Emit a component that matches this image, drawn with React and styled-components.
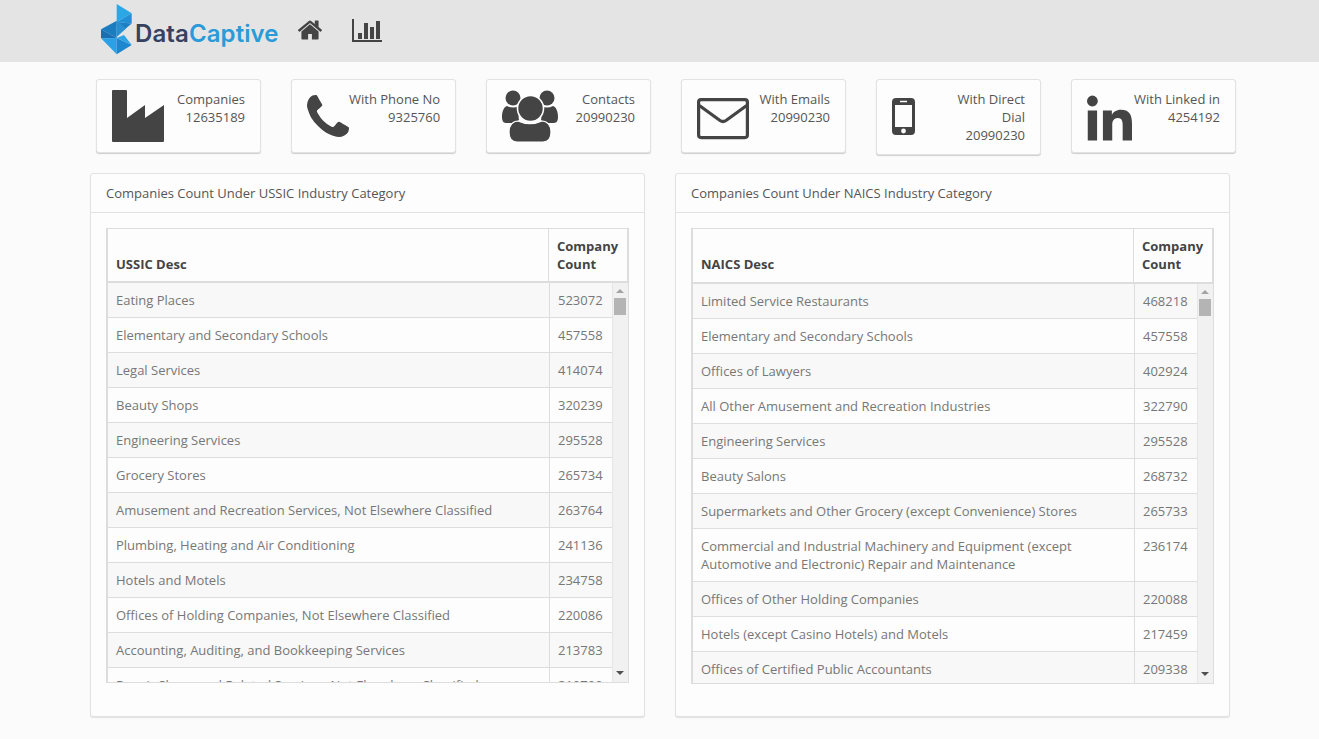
import React from "react";
import styled, { createGlobalStyle } from "styled-components";

const GlobalStyle = createGlobalStyle`
  html, body {
    margin: 0;
    padding: 0;
    background: #fbfbfb;
    font-family: "Open Sans", sans-serif;
    font-size: 13px;
    line-height: 18px;
    color: #555;
  }
  * {
    box-sizing: border-box;
  }
`;

const TopBar = styled.div`
  display: flex;
  align-items: flex-start;
  height: 62px;
  padding-left: 100px;
  background: #e4e4e4;
`;

const Logo = styled.div`
  display: flex;
  align-items: center;
  height: 56px;
  margin-top: 2px;
  width: 198px;
`;

const LogoWord = styled.span`
  margin-top: 8px;
  font-family: Inter, sans-serif;
  font-size: 24px;
  font-weight: 600;
  line-height: 30px;
  letter-spacing: 0.1px;
  color: ${(p) => p.$color};
`;

const NavIcon = styled.a`
  display: block;
  margin-top: ${(p) => p.$top}px;
  margin-right: ${(p) => p.$right}px;
  line-height: 0;
  color: #444;
`;

const CardRow = styled.div`
  display: grid;
  grid-template-columns: repeat(6, 165px);
  gap: 30px;
  align-items: start;
  padding: 17px 0 0 96px;
`;

const Card = styled.div`
  display: flex;
  justify-content: space-between;
  min-height: 74px;
  padding: 10px 15px;
  background: #fdfdfd;
  border: 1px solid #e2e2e2;
  border-radius: 3px;
  box-shadow: 0 1px 1px rgba(0, 0, 0, 0.18);
`;

const CardIcon = styled.div`
  flex: none;
  line-height: 0;
  color: #444;
`;

const CardText = styled.div`
  text-align: right;
  white-space: pre;
  color: #555;
`;

const PanelRow = styled.div`
  display: grid;
  grid-template-columns: 555px 555px;
  gap: 30px;
  padding: 18px 0 22px 90px;
`;

const Panel = styled.div`
  height: 544px;
  background: #fdfdfd;
  border: 1px solid #e2e2e2;
  border-radius: 3px;
  box-shadow: 0 1px 1px rgba(0, 0, 0, 0.1);
`;

const PanelTitle = styled.div`
  height: 39px;
  padding: 10px 15px;
  border-bottom: 1px solid #e2e2e2;
  color: #555;
`;

const PanelBody = styled.div`
  padding: 15px;
`;

const TableWrap = styled.div`
  display: flex;
  flex-direction: column;
  width: 523px;
  height: ${(p) => p.$height}px;
  overflow: hidden;
  border: 1px solid #ddd;
  border-left-width: 2px;
`;

const HeadRow = styled.div`
  display: grid;
  grid-template-columns: 440px 80px;
  flex: none;
  height: ${(p) => p.$height}px;
  border-bottom: 2px solid #ddd;
`;

const HeadCell = styled.div`
  display: flex;
  align-items: flex-start;
  padding: 8px;
  padding-top: ${(p) => (p.$count ? 8 : 26)}px;
  font-weight: 700;
  color: #444;
  border-left: ${(p) => (p.$count ? "1px solid #ddd" : "none")};
  border-right: ${(p) => (p.$count ? "1px solid #ddd" : "none")};
`;

const BodyArea = styled.div`
  display: flex;
  flex: 1;
  min-height: 0;
`;

const Rows = styled.div`
  flex: 1;
  min-width: 0;
  overflow: hidden;
`;

const Row = styled.div`
  display: grid;
  grid-template-columns: 441px 63px;
  background: ${(p) => (p.$odd ? "#f8f8f8" : "#fdfdfd")};
  border-bottom: 1px solid #ddd;
`;

const Cell = styled.div`
  padding: 8px;
  color: #777;
  border-left: ${(p) => (p.$count ? "1px solid #ddd" : "none")};
`;

const ScrollTrack = styled.div`
  position: relative;
  flex: none;
  width: 16px;
  background: #f1f1f1;
  border-left: 1px solid #e6e6e6;
`;

const ScrollThumb = styled.div`
  position: absolute;
  top: 15px;
  left: 1px;
  width: 12px;
  height: 17px;
  background: #b4b4b4;
`;

const ScrollArrow = styled.div`
  position: absolute;
  left: 3px;
  ${(p) => (p.$down ? "bottom: 7px;" : "top: 6px;")}
  width: 0;
  height: 0;
  border-left: 4px solid transparent;
  border-right: 4px solid transparent;
  ${(p) =>
    p.$down ? "border-top: 4px solid #505050;" : "border-bottom: 4px solid #a3a3a3;"}
`;

const LogoMark = () => (
  <svg width="35" height="52" viewBox="0 0 35 52">
    <polygon points="16.7,0 31.7,9.3 16.7,18" fill="#2aa7e4" />
    <polygon points="31.7,9.3 31.7,19.5 16.7,18" fill="#1f90d6" />
    <polygon points="16.7,18 31.7,19.5 24,26 16.7,22" fill="#1b7fc4" />
    <polygon points="1,25.3 16.7,16.7 16.7,34" fill="#1c7cc0" />
    <polygon points="16.7,16.7 26,24.5 16.7,33" fill="#2a8fd0" />
    <polygon points="1,25.3 16.7,34 1,34.3" fill="#1a6fb2" />
    <polygon points="1,34.3 16.7,34 16.7,50.3" fill="#2ca0e4" />
    <polygon points="16.7,34 31.7,41 16.7,50.3" fill="#1c86cf" />
    <polygon points="16.7,34 24,31 31.7,41" fill="#2ea3e6" />
  </svg>
);

const HomeIcon = () => (
  <svg width="24" height="20" viewBox="90 240 1612 1300" fill="currentColor">
    <path d="M1472 992v480q0 26-19 45t-45 19h-384v-384h-256v384h-384q-26 0-45-19t-19-45v-480q0-1 .5-3t.5-3l575-474 575 474q1 2 1 6zm223-69l-62 74q-8 9-21 11h-3q-13 0-21-7l-692-577-692 577q-12 8-24 7-13-2-21-11l-62-74q-8-10-7-23.5t11-21.5l719-599q32-26 76-26t76 26l244 204v-195q0-14 9-23t23-9h192q14 0 23 9t9 23v408l219 182q10 8 11 21.5t-7 23.5z" />
  </svg>
);

const ChartIcon = () => (
  <svg width="30" height="23" viewBox="0 0 30 23" fill="currentColor">
    <rect x="0" y="0" width="2" height="23" />
    <rect x="0" y="21" width="30" height="2" />
    <rect x="6" y="14" width="4" height="6" />
    <rect x="12" y="4" width="4" height="16" />
    <rect x="18" y="8" width="4" height="12" />
    <rect x="24" y="2" width="4" height="18" />
  </svg>
);

const FactoryIcon = () => (
  <svg width="52" height="52" viewBox="0 0 52 52" fill="currentColor">
    <path d="M1 0h13a1 1 0 0 1 1 1v27l18-13v13l19-13v36a1 1 0 0 1-1 1H1a1 1 0 0 1-1-1V1a1 1 0 0 1 1-1z" />
  </svg>
);

const PhoneIcon = () => (
  <svg width="42" height="52" viewBox="192 -40 1408 1745" fill="currentColor">
    <path d="M1600 1240q0 27-10 70.5t-21 68.5q-21 50-122 106-94 51-186 51-27 0-53-3.5t-57.5-12.5-47-14.5-55.5-20.5-49-18q-98-35-175-83-127-79-264-216t-216-264q-48-77-83-175-3-9-18-49t-20.5-55.5-14.5-47-12.5-57.5-3.5-53q0-92 51-186 56-101 106-122 25-11 68.5-21t70.5-10q14 0 21 3 18 6 53 76 11 19 30 54t35 63.5 31 53.5q3 4 17.5 25t21.5 35.5 7 28.5q0 20-28.5 50t-62 55-62 53-28.5 46q0 9 5 22.5t8.5 20.5 14 24 11.5 19q76 137 174 235t235 174q2 1 19 11.5t24 14 20.5 8.5 22.5 5q18 0 46-28.5t53-62 55-62 50-28.5q14 0 28.5 7t35.5 21.5 25 17.5q25 15 53.5 31t63.5 35 54 30q70 35 76 53 3 7 3 21z" />
  </svg>
);

const PeopleIcon = () => (
  <svg width="56" height="52" viewBox="0 0 56 52" fill="currentColor">
    <circle cx="11" cy="8" r="7.5" />
    <circle cx="45" cy="8" r="7.5" />
    <path d="M0 27c0-6 2-10 5-11 4 2 8 2 12 0l3 2c-3 3-4 8-3 12l-4 3H4c-3 0-4-3-4-6z" />
    <path d="M56 27c0-6-2-10-5-11-4 2-8 2-12 0l-3 2c3 3 4 8 3 12l4 3h9c3 0 4-3 4-6z" />
    <circle cx="28.5" cy="18.5" r="13" stroke="#fdfdfd" strokeWidth="1.6" />
    <path
      d="M7 42c0-7 4-11 9-11 7 3.5 17 3.5 24 0 5 0 9 4 9 11 0 6-3 10-8 10H15c-5 0-8-4-8-10z"
      stroke="#fdfdfd"
      strokeWidth="1.2"
    />
  </svg>
);

const MailIcon = () => (
  <svg width="52" height="52" viewBox="0 0 52 52" fill="none" stroke="currentColor" strokeWidth="3.2">
    <rect x="1.6" y="9.6" width="48.8" height="38" rx="2.5" />
    <path d="M3 16l20 14.5q3 2 6 0L49 16" strokeLinecap="round" />
  </svg>
);

const MobileIcon = () => (
  <svg width="52" height="52" viewBox="0 0 52 52" fill="currentColor">
    <path
      fillRule="evenodd"
      d="M4 8h15a4 4 0 0 1 4 4v29a4 4 0 0 1-4 4H4a4 4 0 0 1-4-4V12a4 4 0 0 1 4-4zM3 15v22h17V15zM8 10.8v1.4h7v-1.4zM11.5 38.6a2.4 2.4 0 1 0 0 4.8 2.4 2.4 0 0 0 0-4.8z"
    />
  </svg>
);

const InIcon = () => (
  <svg width="45" height="52" viewBox="0 -56 448 518" fill="currentColor">
    <path d="M100.28 448H7.4V148.9h92.88zM53.79 108.1C24.09 108.1 0 83.5 0 53.8a53.79 53.79 0 0 1 107.58 0c0 29.7-24.1 54.3-53.79 54.3zM447.9 448h-92.68V302.4c0-34.7-.7-79.2-48.29-79.2-48.29 0-55.69 37.7-55.69 76.7V448h-92.78V148.9h89.08v40.8h1.3c12.4-23.5 42.69-48.3 87.88-48.3 94 0 111.28 61.9 111.28 142.3V448z" />
  </svg>
);

const stats = [
  { icon: <FactoryIcon />, text: "Companies\n12635189" },
  { icon: <PhoneIcon />, text: "With Phone No\n9325760" },
  { icon: <PeopleIcon />, text: "Contacts\n20990230" },
  { icon: <MailIcon />, text: "With Emails\n20990230" },
  { icon: <MobileIcon />, text: "With Direct\nDial\n20990230" },
  { icon: <InIcon />, text: "With Linked in\n4254192" },
];

const ussicRows = [
  ["Eating Places", "523072"],
  ["Elementary and Secondary Schools", "457558"],
  ["Legal Services", "414074"],
  ["Beauty Shops", "320239"],
  ["Engineering Services", "295528"],
  ["Grocery Stores", "265734"],
  ["Amusement and Recreation Services, Not Elsewhere Classified", "263764"],
  ["Plumbing, Heating and Air Conditioning", "241136"],
  ["Hotels and Motels", "234758"],
  ["Offices of Holding Companies, Not Elsewhere Classified", "220086"],
  ["Accounting, Auditing, and Bookkeeping Services", "213783"],
  ["Repair Shops and Related Services, Not Elsewhere Classified", "210709"],
];

const naicsRows = [
  ["Limited Service Restaurants", "468218"],
  ["Elementary and Secondary Schools", "457558"],
  ["Offices of Lawyers", "402924"],
  ["All Other Amusement and Recreation Industries", "322790"],
  ["Engineering Services", "295528"],
  ["Beauty Salons", "268732"],
  ["Supermarkets and Other Grocery (except Convenience) Stores", "265733"],
  [
    "Commercial and Industrial Machinery and Equipment (except Automotive and Electronic) Repair and Maintenance",
    "236174",
  ],
  ["Offices of Other Holding Companies", "220088"],
  ["Hotels (except Casino Hotels) and Motels", "217459"],
  ["Offices of Certified Public Accountants", "209338"],
];

function CountTable({ title, column, rows, height, headHeight }) {
  return (
    <Panel>
      <PanelTitle>{title}</PanelTitle>
      <PanelBody>
        <TableWrap $height={height}>
          <HeadRow $height={headHeight}>
            <HeadCell>{column}</HeadCell>
            <HeadCell $count>Company Count</HeadCell>
          </HeadRow>
          <BodyArea>
            <Rows>
              {rows.map(([name, count], i) => (
                <Row key={name} $odd={i % 2 === 0}>
                  <Cell>{name}</Cell>
                  <Cell $count>{count}</Cell>
                </Row>
              ))}
            </Rows>
            <ScrollTrack>
              <ScrollArrow />
              <ScrollThumb />
              <ScrollArrow $down />
            </ScrollTrack>
          </BodyArea>
        </TableWrap>
      </PanelBody>
    </Panel>
  );
}

export default function App() {
  return (
    <>
      <GlobalStyle />
      <TopBar>
        <Logo>
          <LogoMark />
          <LogoWord $color="#36405f">Data</LogoWord>
          <LogoWord $color="#2a9bd8">Captive</LogoWord>
        </Logo>
        <NavIcon $top={20} $right={30}>
          <HomeIcon />
        </NavIcon>
        <NavIcon $top={19}>
          <ChartIcon />
        </NavIcon>
      </TopBar>
      <CardRow>
        {stats.map((s) => (
          <Card key={s.text}>
            <CardIcon>{s.icon}</CardIcon>
            <CardText>{s.text}</CardText>
          </Card>
        ))}
      </CardRow>
      <PanelRow>
        <CountTable
          title="Companies Count Under USSIC Industry Category"
          column="USSIC Desc"
          rows={ussicRows}
          height={455}
          headHeight={54}
        />
        <CountTable
          title="Companies Count Under NAICS Industry Category"
          column="NAICS Desc"
          rows={naicsRows}
          height={456}
          headHeight={55}
        />
      </PanelRow>
    </>
  );
}
